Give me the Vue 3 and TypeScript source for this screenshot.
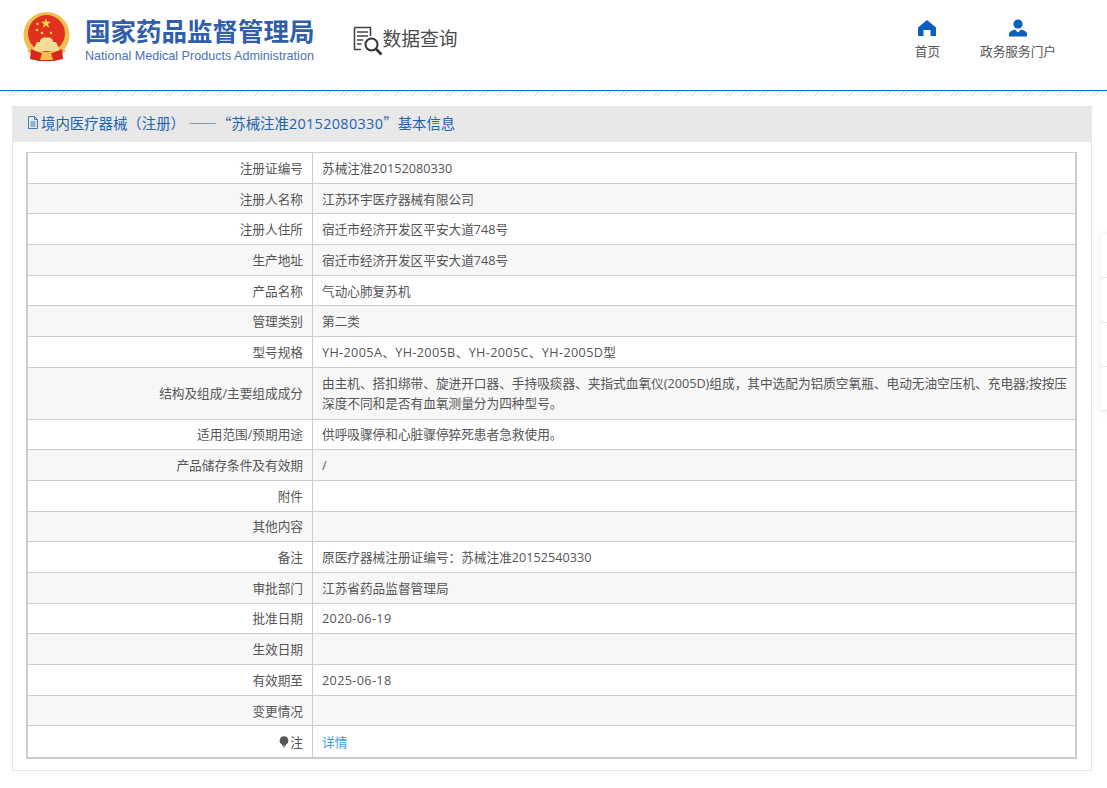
<template>
  <div class="page">
    <header class="top">
      <div class="brand">
        <svg class="emblem" viewBox="0 0 47 49" width="47" height="49">
          <circle cx="23.500" cy="23" r="23" fill="#efbe4e" />
          <circle cx="23.500" cy="21.500" r="18.500" fill="#e2301f" />
          <polygon points="23,6 24.300,9.700 28,9.700 25,12 26.200,15.800 23,13.500 19.800,15.800 21,12 18,9.700 21.700,9.700" fill="#f7d54a" />
          <circle cx="14.500" cy="12" r="1.300" fill="#f7d54a" />
          <circle cx="14" cy="18" r="1.300" fill="#f7d54a" />
          <circle cx="19" cy="21" r="1.300" fill="#f7d54a" />
          <circle cx="28" cy="21" r="1.300" fill="#f7d54a" />
          <path d="M17 28 L20 25.500 H27 L30 28 V30 H33 L36 36 V39 H11 V36 L14 30 H17 Z" fill="#f5dc96" />
          <path d="M6 37 Q23.500 49 41 37 L43 39 Q23.500 54 4 39 Z" fill="#efbe4e" />
          <path d="M8 37 L15 40 L23.500 43 L32 40 L39 37 L40 47 L31 49 H16 L7 47 Z" fill="#d8261c" />
          <path d="M19 41 H28 L30 48 H17 Z" fill="#f0c04a" />
        </svg>
        <div class="brand-text">
          <div class="brand-cn">国家药品监督管理局</div>
          <div class="brand-en">National Medical Products Administration</div>
        </div>
      </div>
      <div class="query">
        <svg class="query-icon" viewBox="0 0 30 30" width="30" height="30">
          <path d="M1.500 1.500 H17.500 V10 M8 23.500 H1.500 V1.500" fill="none" stroke="#444" stroke-width="1.600" />
          <path d="M4 6 H15 M4 10 H15 M4 14 H10 M4 18 H8.500" stroke="#444" stroke-width="1.600" />
          <circle cx="18.500" cy="18.500" r="6" fill="none" stroke="#333" stroke-width="2" />
          <path d="M23 23 L28.500 28.500" stroke="#333" stroke-width="2.600" />
        </svg>
        <span>数据查询</span>
      </div>
      <nav class="links">
        <a class="link">
          <svg viewBox="0 0 18 18" width="18" height="18">
            <path d="M9 1 L18 8.500 V17 H12.500 V11 H5.500 V17 H0 V8.500 Z" fill="#0a5fc0" />
          </svg>
          <span>首页</span>
        </a>
        <a class="link">
          <svg viewBox="0 0 18 18" width="18" height="18">
            <circle cx="9" cy="5" r="4.600" fill="#0a5fc0" />
            <path d="M0 17.500 V14.500 Q0.500 12 6 10.500 L9 13.500 L12 10.500 Q17.500 12 18 14.500 V17.500 Z" fill="#0a5fc0" />
          </svg>
          <span>政务服务门户</span>
        </a>
      </nav>
    </header>
    <div class="hatch"></div>

    <section class="panel">
      <h2 class="panel-title" lang="zh-CN">
        <svg viewBox="0 0 12 13" width="12" height="13">
          <path d="M1.500 0.500 H7.500 L10.500 3.500 V12.500 H1.500 Z M7.500 0.500 V3.500 H10.500 M3.500 6 H8.500 M3.500 8 H8.500 M3.500 10 H8.500" fill="none" stroke="#2a6fb8" stroke-width="0.900" />
        </svg>
        <span>境内医疗器械（注册）  ——“苏械注准<span class="title-num">20152080330</span>”基本信息</span>
      </h2>
      <div class="table-wrap">
        <div class="info">
          <div v-for="row in rows" :key="row.label" class="row" :class="{ tall: row.tall }">
            <div class="label">
              <svg v-if="row.note" class="note-icon" viewBox="0 0 10 12" width="10" height="12">
                <path d="M5 0.300 A4.400 4.400 0 0 1 7 8.600 L6.500 9.800 H3.500 L3 8.600 A4.400 4.400 0 0 1 5 0.300 Z" fill="#555" />
                <rect x="3.700" y="10.300" width="2.600" height="1.200" fill="#888" />
              </svg>{{ row.label }}
            </div>
            <div class="value" :class="{ wide: row.wide }">
              <a v-if="row.link" class="detail">{{ row.value }}</a>
              <template v-else>{{ row.value }}</template>
            </div>
          </div>
        </div>
      </div>
    </section>

    <aside class="float-bar">
      <div v-for="n in 4" :key="n" class="float-cell"></div>
    </aside>
  </div>
</template>

<script setup lang="ts">
interface InfoRow {
  label: string;
  value: string;
  note?: boolean;
  link?: boolean;
  tall?: boolean;
  wide?: boolean;
}

const rows: InfoRow[] = [
  { label: '注册证编号', value: '苏械注准20152080330' },
  { label: '注册人名称', value: '江苏环宇医疗器械有限公司' },
  { label: '注册人住所', value: '宿迁市经济开发区平安大道748号' },
  { label: '生产地址', value: '宿迁市经济开发区平安大道748号' },
  { label: '产品名称', value: '气动心肺复苏机' },
  { label: '管理类别', value: '第二类' },
  { label: '型号规格', value: 'YH-2005A、YH-2005B、YH-2005C、YH-2005D型', wide: true },
  {
    label: '结构及组成/主要组成成分',
    value:
      '由主机、搭扣绑带、旋进开口器、手持吸痰器、夹指式血氧仪(2005D)组成，其中选配为铝质空氧瓶、电动无油空压机、充电器;按按压深度不同和是否有血氧测量分为四种型号。',
    tall: true,
  },
  { label: '适用范围/预期用途', value: '供呼吸骤停和心脏骤停猝死患者急救使用。' },
  { label: '产品储存条件及有效期', value: '/' },
  { label: '附件', value: '' },
  { label: '其他内容', value: '' },
  { label: '备注', value: '原医疗器械注册证编号：苏械注准20152540330' },
  { label: '审批部门', value: '江苏省药品监督管理局' },
  { label: '批准日期', value: '2020-06-19', wide: true },
  { label: '生效日期', value: '' },
  { label: '有效期至', value: '2025-06-18', wide: true },
  { label: '变更情况', value: '' },
  { label: '注', value: '详情', note: true, link: true },
];
</script>

<style scoped>
.page {
  position: relative;
  width: 1107px;
  height: 788px;
  overflow: hidden;
  background: #fff;
  color: #555;
  font-family: "Open Sans", "Noto Sans CJK SC", sans-serif;
  font-size: 12.670px;
}

.top {
  display: flex;
  align-items: flex-start;
  height: 91px;
  box-sizing: border-box;
  border-bottom: 1px solid #0a66c8;
}

.brand {
  display: flex;
  align-items: flex-start;
  margin: 12px 0 0 23px;
}

.emblem {
  display: block;
}

.brand-text {
  margin-left: 15px;
}

.brand-cn {
  font-family: "Noto Sans CJK SC", sans-serif;
  font-size: 25.500px;
  font-weight: 700;
  line-height: 36px;
  color: #2f5eaa;
  white-space: nowrap;
}

.brand-en {
  font-family: "Liberation Sans", sans-serif;
  font-size: 12.600px;
  line-height: 17px;
  color: #4a72b4;
  white-space: nowrap;
}

.query {
  display: flex;
  align-items: flex-start;
  margin: 25px 0 0 38px;
  font-family: "Noto Sans CJK SC", sans-serif;
  font-size: 18.800px;
  line-height: 26px;
  color: #4a4a4a;
}

.query-icon {
  margin-top: 1px;
}

.links {
  display: flex;
  margin-left: auto;
  margin-right: 51px;
  margin-top: 19px;
  gap: 40px;
}

.link {
  display: flex;
  flex-direction: column;
  align-items: center;
  gap: 5px;
  line-height: 18px;
  color: #555;
}

.hatch {
  height: 5px;
  background: repeating-linear-gradient(135deg, #e6e6e6 0 1px, #fff 1px 3px);
}

.panel {
  margin: 10px 15px 0 12px;
  height: 665px;
  box-sizing: border-box;
  border: 1px solid #e8e8e8;
  border-top: none;
}

.panel-title {
  display: flex;
  align-items: center;
  gap: 2px;
  height: 36px;
  box-sizing: border-box;
  margin: 0 -1px;
  padding: 0 0 3px 15px;
  background: #e8e8e8;
  color: #1c64ad;
  font-family: "Noto Sans CJK SC", sans-serif;
  font-size: 14.400px;
  font-weight: 400;
  white-space: pre;
}

.title-num {
  font-family: "Open Sans", sans-serif;
  letter-spacing: 0.350px;
}

.table-wrap {
  padding: 10px 14px 0 13px;
}

.info {
  width: 1051px;
  box-sizing: border-box;
  border: 1px solid #ccc;
  border-width: 1px 2px 2px;
}

.row {
  display: flex;
  height: 30.700px;
  box-sizing: border-box;
  border-bottom: 1px solid #ccc;
}

.row:nth-child(even) {
  background: #f7f7f7;
}

.row:last-child {
  border-bottom: none;
}

.row.tall {
  height: 51.700px;
}

.label,
.value {
  display: flex;
  align-items: center;
  padding: 0 9px;
  line-height: 20px;
  box-sizing: border-box;
}

.label {
  flex: 0 0 285px;
  justify-content: flex-end;
  border-right: 1px solid #ccc;
}

.value {
  flex: 1;
  min-width: 0;
  padding-right: 7px;
}

.value.wide {
  letter-spacing: 0.350px;
}

.note-icon {
  margin-right: 1px;
}

.detail {
  color: #3d9bf0;
}

.float-bar {
  position: absolute;
  top: 234px;
  left: 1101px;
  width: 30px;
  height: 177px;
  background: #fff;
  box-shadow: 0 0 6px rgba(90, 80, 140, 0.14);
  display: flex;
  flex-direction: column;
}

.float-cell {
  flex: 1;
  border-bottom: 1px solid #e8e8f0;
}
</style>
